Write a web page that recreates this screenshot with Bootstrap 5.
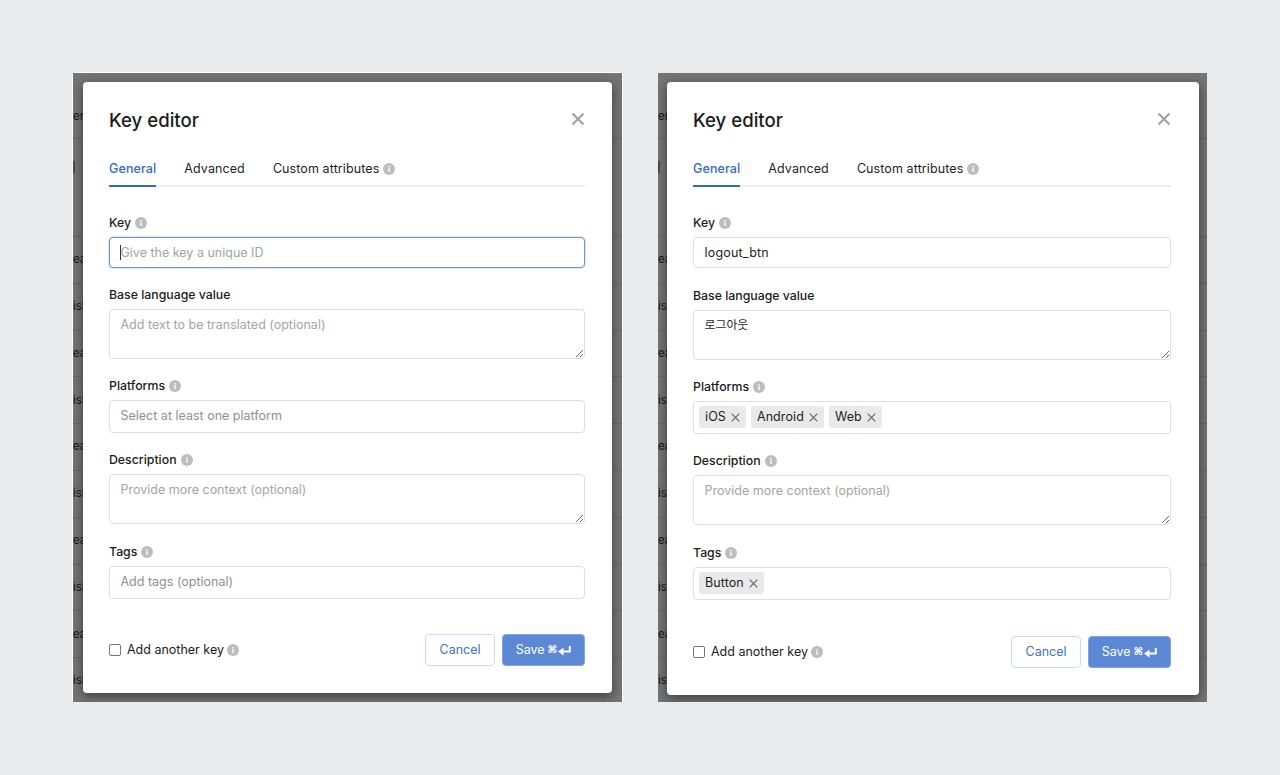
<!doctype html>
<html lang="en">
<head>
<meta charset="utf-8">
<title>Key editor</title>
<link href="https://cdn.jsdelivr.net/npm/bootstrap@5.3.0/dist/css/bootstrap.min.css" rel="stylesheet">
<style>
body{background:#e8ecef;font-family:Inter,"Noto Sans CJK KR",sans-serif;color:#1b1b1b;font-size:12.5px;overflow:hidden}
.stage{padding:73px 0 0 73px;gap:36px}
.backdrop{width:549px;height:629px;background:#757575;overflow:hidden;position:relative}
.backdrop.edged{outline:1px solid #fff}
.bgrow{height:46.8px;border-bottom:1px solid #666;font-size:11.5px;color:#161616;display:flex;align-items:center;white-space:nowrap}
.bgrow.first{height:66px;padding-top:22px}
.bgrow.tall{height:98px}
.bgrow.tall i{display:block;width:2px;height:12px;background:#4a4a4a;margin-top:-42px}
.dialog{position:absolute;top:9px;left:10px;width:529px;height:611px;background:#fff;border-radius:4px;box-shadow:0 3px 12px rgba(0,0,0,.5);padding:26px 27px 0 26px}
.dialog.alt{left:9px;width:532px;height:613px;padding-right:28px}
.dlg-title{font-size:18.6px;font-weight:500;line-height:24px;margin:0}
.closer{width:14px;height:14px;margin:4px 0 0 0;color:#a2a2a2}
.tabbar{margin-top:24px;border-bottom:2px solid #eceeef;gap:28px;height:31px}
.tabitem{font-size:12.5px;line-height:24px;letter-spacing:.1px;color:#1e1e1e;height:31px;padding-top:1px}
.tabitem.on{color:#2f6cc5;font-weight:500;border-bottom:2px solid #2f6cc5}
.tabdot{margin-top:6px}
.fieldlabel{font-size:12.3px;font-weight:500;line-height:18px;margin:0 0 5px;padding-top:1px;display:flex;align-items:center;gap:4px}
.dot{width:12px;height:12px;flex:none;display:inline-block}
.fld{border:1.5px solid #dcdee0;border-radius:4px;font-size:12.5px;letter-spacing:.2px;padding:0 10.5px;color:#1e1e1e;box-shadow:none;font-family:inherit}
.fld::placeholder{color:#a4a4a4;opacity:1;letter-spacing:0}
input.fld{height:31px}
textarea.fld{height:50px;padding-top:6px;line-height:18px;resize:vertical}
textarea.fld.hangul{font-size:11.9px;letter-spacing:0;padding-top:5px}
div.fld{height:33px;display:flex;align-items:center;gap:5px;padding:0 5px}
div.fld.empty{padding:0 10.5px;color:#8f8f8f;letter-spacing:0}
.fld.focused{border-color:#6d92d6;box-shadow:0 0 0 1px rgba(109,146,214,.22)}
.caretwrap{position:relative}
.caretmark{position:absolute;left:11px;top:8px;width:1px;height:15px;background:#333}
.gap-a{margin-top:26px}
.gap-b{margin-top:17px}
.gap-c{margin-top:18px}
.chip{background:#e9e9e9;border-radius:3px;height:22px;margin-top:-1px;padding:0 6px;display:inline-flex;align-items:center;gap:5px;font-size:12.5px;letter-spacing:.1px;color:#1e1e1e}
.chip svg{width:9px;height:9px;color:#666}
.foot{margin-top:35px;height:32px}
.foot.altf{margin-top:36px}
.addkey{font-size:12.5px;gap:3px}
.addkey .form-check-input{width:12px;height:12px;margin:0 3px 0 0;border:1px solid #757575;border-radius:2px}
.btn-cancel{width:70px;height:32px;padding:0;font-size:12.5px;color:#3f72c6;background:#fff;border:1.5px solid #c9d9f3;border-radius:4px}
.btn-save{width:83px;height:32px;padding:0;font-size:12.5px;color:#fff;background:#5c88d6;border:1px solid #7fa3e4;border-radius:4px;display:flex;align-items:center;justify-content:center;gap:3px;margin-left:7px}
.btn-save .cmd{font-size:10.5px;font-family:"DejaVu Sans",sans-serif;font-weight:700}
.btn-save svg{margin-left:-2px}
</style>
</head>
<body>
<svg width="0" height="0" class="position-absolute">
<defs>
<symbol id="info" viewBox="0 0 12 12"><circle cx="6" cy="6" r="6" fill="#bdbdbd"/><rect x="5.3" y="5.2" width="1.4" height="3.8" fill="#fff"/><rect x="5.3" y="3" width="1.4" height="1.4" fill="#fff"/></symbol>
<symbol id="cross" viewBox="0 0 14 14"><path d="M1.5 1.5L12.5 12.5M12.5 1.5L1.5 12.5" stroke="currentColor" stroke-width="2.2" fill="none"/></symbol>
<symbol id="tiny" viewBox="0 0 9 9"><path d="M.7.7L8.3 8.3M8.3.7L.7 8.3" stroke="currentColor" stroke-width="1.2" fill="none"/></symbol>
<symbol id="ret" viewBox="0 0 13 11"><path d="M11.8 1v5.6H4" stroke="#fff" stroke-width="2" fill="none"/><path d="M0 6.6l5.5-3.8v7.6z" fill="#fff"/></symbol>
</defs>
</svg>
<div class="stage d-flex">

<div class="backdrop edged">
  <div class="bgrow first">er</div><div class="bgrow tall"><i></i></div>
  <div class="bgrow">ear</div><div class="bgrow">isl</div><div class="bgrow">ear</div><div class="bgrow">isl</div><div class="bgrow">ear</div><div class="bgrow">isl</div><div class="bgrow">ear</div><div class="bgrow">isl</div><div class="bgrow">ear</div><div class="bgrow">isl</div>
  <div class="dialog">
    <div class="d-flex justify-content-between align-items-start">
      <h5 class="dlg-title">Key editor</h5>
      <svg class="closer"><use href="#cross"/></svg>
    </div>
    <div class="tabbar d-flex">
      <div class="tabitem on">General</div>
      <div class="tabitem">Advanced</div>
      <div class="tabitem d-flex align-items-start gap-1">Custom attributes <svg class="dot tabdot"><use href="#info"/></svg></div>
    </div>
    <div class="gap-a">
      <label class="fieldlabel">Key <svg class="dot"><use href="#info"/></svg></label>
      <div class="caretwrap"><input class="form-control fld focused" placeholder="Give the key a unique ID"><span class="caretmark"></span></div>
    </div>
    <div class="gap-b">
      <label class="fieldlabel">Base language value</label>
      <textarea class="form-control fld" placeholder="Add text to be translated (optional)"></textarea>
    </div>
    <div class="gap-b">
      <label class="fieldlabel">Platforms <svg class="dot"><use href="#info"/></svg></label>
      <div class="form-control fld empty">Select at least one platform</div>
    </div>
    <div class="gap-b">
      <label class="fieldlabel">Description <svg class="dot"><use href="#info"/></svg></label>
      <textarea class="form-control fld" placeholder="Provide more context (optional)"></textarea>
    </div>
    <div class="gap-c">
      <label class="fieldlabel">Tags <svg class="dot"><use href="#info"/></svg></label>
      <div class="form-control fld empty">Add tags (optional)</div>
    </div>
    <div class="foot d-flex align-items-center justify-content-between">
      <div class="addkey d-flex align-items-center"><input class="form-check-input" type="checkbox"><span>Add another key</span> <svg class="dot"><use href="#info"/></svg></div>
      <div class="d-flex">
        <button class="btn btn-cancel">Cancel</button>
        <button class="btn btn-save">Save <span class="cmd">⌘</span><svg width="13" height="11"><use href="#ret"/></svg></button>
      </div>
    </div>
  </div>
</div>

<div class="backdrop">
  <div class="bgrow first">er</div><div class="bgrow tall"><i></i></div>
  <div class="bgrow">ear</div><div class="bgrow">isl</div><div class="bgrow">ear</div><div class="bgrow">isl</div><div class="bgrow">ear</div><div class="bgrow">isl</div><div class="bgrow">ear</div><div class="bgrow">isl</div><div class="bgrow">ear</div><div class="bgrow">isl</div>
  <div class="dialog alt">
    <div class="d-flex justify-content-between align-items-start">
      <h5 class="dlg-title">Key editor</h5>
      <svg class="closer"><use href="#cross"/></svg>
    </div>
    <div class="tabbar d-flex">
      <div class="tabitem on">General</div>
      <div class="tabitem">Advanced</div>
      <div class="tabitem d-flex align-items-start gap-1">Custom attributes <svg class="dot tabdot"><use href="#info"/></svg></div>
    </div>
    <div class="gap-a">
      <label class="fieldlabel">Key <svg class="dot"><use href="#info"/></svg></label>
      <input class="form-control fld" value="logout_btn">
    </div>
    <div class="gap-c">
      <label class="fieldlabel">Base language value</label>
      <textarea class="form-control fld hangul">로그아웃</textarea>
    </div>
    <div class="gap-b">
      <label class="fieldlabel">Platforms <svg class="dot"><use href="#info"/></svg></label>
      <div class="form-control fld">
        <span class="chip">iOS <svg><use href="#tiny"/></svg></span>
        <span class="chip">Android <svg><use href="#tiny"/></svg></span>
        <span class="chip">Web <svg><use href="#tiny"/></svg></span>
      </div>
    </div>
    <div class="gap-b">
      <label class="fieldlabel">Description <svg class="dot"><use href="#info"/></svg></label>
      <textarea class="form-control fld" placeholder="Provide more context (optional)"></textarea>
    </div>
    <div class="gap-c">
      <label class="fieldlabel">Tags <svg class="dot"><use href="#info"/></svg></label>
      <div class="form-control fld"><span class="chip">Button <svg><use href="#tiny"/></svg></span></div>
    </div>
    <div class="foot altf d-flex align-items-center justify-content-between">
      <div class="addkey d-flex align-items-center"><input class="form-check-input" type="checkbox"><span>Add another key</span> <svg class="dot"><use href="#info"/></svg></div>
      <div class="d-flex">
        <button class="btn btn-cancel">Cancel</button>
        <button class="btn btn-save">Save <span class="cmd">⌘</span><svg width="13" height="11"><use href="#ret"/></svg></button>
      </div>
    </div>
  </div>
</div>

</div>
<script src="https://cdn.jsdelivr.net/npm/bootstrap@5.3.0/dist/js/bootstrap.bundle.min.js"></script>
</body>
</html>
